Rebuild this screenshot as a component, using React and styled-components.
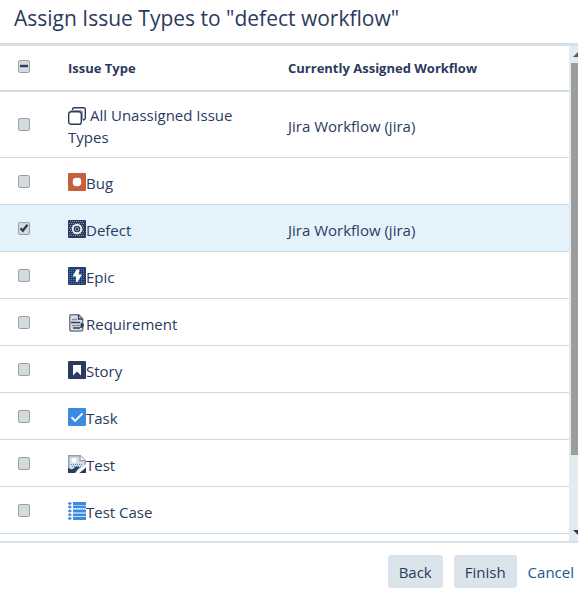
import React, { useEffect, useRef, useState } from "react";
import styled, { createGlobalStyle } from "styled-components";

const ink = "#2b3a5e";
const line = "#cfd9e0";

const GlobalStyle = createGlobalStyle`
  * { box-sizing: border-box; }
  body {
    margin: 0;
    background: #fff;
    color: ${ink};
    font: 15px/22px "Segoe UI", "Open Sans", sans-serif;
  }
`;

const Dialog = styled.section`
  display: flex;
  flex-direction: column;
  height: 100vh;
`;

const Header = styled.header`
  padding: 4px 14px 11px;
  border-bottom: 3px solid #d5dfe5;
`;

const Title = styled.h1`
  margin: 0;
  font-size: 21px;
  line-height: 28px;
  font-weight: 400;
  white-space: nowrap;
`;

const Body = styled.div`
  display: flex;
  flex: 1;
  min-height: 0;
  overflow: hidden;
  border-bottom: 2px solid #d5e2ea;
`;

const TableArea = styled.div`
  flex: 1;
  min-width: 0;
  overflow: hidden;
`;

const Table = styled.table`
  width: 100%;
  border-collapse: separate;
  border-spacing: 0;
  table-layout: fixed;
`;

const HeadCell = styled.th`
  width: ${(p) => p.$width || "auto"};
  height: 46px;
  padding: ${(p) => (p.$tick ? "0 18px 4px" : "0")};
  border-bottom: 2px solid ${line};
  font-size: 13px;
  font-weight: 700;
  text-align: left;
  vertical-align: middle;
`;

const Row = styled.tr`
  background: ${(p) => (p.$selected ? "#e4f3fb" : "#fff")};
`;

const Cell = styled.td`
  height: 47px;
  padding: ${(p) => (p.$tick ? "10px 18px" : "12px 40px 9px 0")};
  border-bottom: 1px solid ${line};
  vertical-align: middle;
`;

const TypeLabel = styled.label`
  display: ${(p) => (p.$wraps ? "block" : "flex")};
  align-items: flex-start;
`;

const Icon = styled.svg`
  flex: none;
  width: 18px;
  height: 18px;
  margin-top: ${(p) => (p.$spaced ? "0" : "1px")};
  vertical-align: -4px;
  margin-right: ${(p) => (p.$spaced ? "4px" : "0")};
`;

const TickBox = styled.span`
  display: block;
  position: relative;
  width: 12px;
  height: 13px;
`;

const TickInput = styled.input`
  appearance: none;
  display: block;
  width: 12px;
  height: 13px;
  margin: 0;
  border: 1px solid #9b9fa1;
  border-radius: 2px;
  background: #d4dbde;
`;

const TickMark = styled.svg`
  position: absolute;
  inset: 0;
  width: 12px;
  height: 12px;
  pointer-events: none;
`;

const ScrollBar = styled.div`
  flex: none;
  display: flex;
  flex-direction: column;
  width: 9px;
  padding-left: 2px;
  overflow: hidden;
  background: #e4ebef;
`;

const ScrollArrow = styled.svg`
  flex: none;
  width: 7px;
  height: 17px;
`;

const ScrollTrack = styled.div`
  flex: 1;
`;

const ScrollThumb = styled.div`
  height: 85%;
  background: #9b9d9e;
`;

const Footer = styled.footer`
  display: flex;
  justify-content: flex-end;
  align-items: center;
  gap: 11px;
  height: 51px;
  padding: 5px 4px 0 14px;
`;

const Button = styled.button`
  height: 33px;
  padding: 2px 11px 0;
  border: 0;
  border-radius: 3px;
  background: #dbe4ea;
  color: ${ink};
  font: inherit;
`;

const CancelLink = styled.a`
  padding-top: 2px;
  color: #1d5596;
  text-decoration: none;
`;

const icons = {
  all: (
    <g fill="none" strokeWidth="1.4">
      <path d="M4.5 3.5v-1q0-1.8 2-1.8h9q1.8 0 1.8 2v8q0 2-2.3 2.3" stroke={ink} />
      <path d="M3 3.7h9.5q1.8 0 1.8 1.5v8" stroke="#9a9c9d" />
      <rect x=".7" y="4.7" width="12.6" height="12.6" rx="2.4" stroke={ink} />
    </g>
  ),
  bug: (
    <>
      <rect width="18" height="18" rx="1" fill="#c5603a" />
      <rect x="4.8" y="4.8" width="8.4" height="8.4" rx="3.4" fill="#fff" />
    </>
  ),
  defect: (
    <>
      <rect width="18" height="18" rx="1" fill={ink} />
      <path
        d="M2 1.5h14M1 3.5h16M2 5.5h14M1 7.5h16M2 9.5h14M1 11.5h16M2 13.5h14M1 15.5h16"
        stroke="#8e959f" strokeDasharray="1 1"
      />
      <circle cx="9" cy="9" r="4.3" fill={ink} stroke="#e8edf0" strokeWidth="2" />
      <circle cx="9" cy="9" r="1.8" fill={ink} stroke="#9b9fa4" />
    </>
  ),
  epic: (
    <>
      <rect width="18" height="18" rx="1" fill={ink} />
      <path
        d="M1 2.5h16M1 4.5h16M1 6.5h16M1 8.5h16M1 10.5h16M1 12.5h16M1 14.5h16M1 16.5h16"
        stroke="#2f7fdc" strokeDasharray="1 1"
      />
      <path d="M8.5 2.5 4.5 9.5H8v5.5h1.5L14 7.5h-3.5l1-5z" fill="#fff" />
    </>
  ),
  requirement: (
    <>
      <path d="M2.5.8h8.2l4 4v11q0 1.2-1.4 1.2H3.2q-1.4 0-1.4-1.4V2z" fill="#dce1e4" stroke="#777d88" strokeWidth="1.5" />
      <path d="M10.5 1v4h4M3 8.5h9M5 14h7" fill="none" stroke={ink} strokeWidth="1.3" />
      <path d="M4 5.5h5M4 11.5h9" stroke="#8b9197" strokeWidth="1.6" />
      <path d="m12.5 8.2 3.5 2.3-1 3-3.5.5 1.5-2.2z" fill={ink} />
    </>
  ),
  story: (
    <>
      <rect width="18" height="18" rx="1" fill={ink} />
      <path d="M5 4h8v10.5l-4-4-4 4z" fill="#fff" />
    </>
  ),
  task: (
    <>
      <rect width="18" height="18" rx="1" fill="#3b8be3" />
      <path d="m3.5 9.2 3.6 3.6 7.4-7.4" fill="none" stroke="#fff" strokeWidth="1.9" />
    </>
  ),
  test: (
    <>
      <path d="M.7.7h11.5l5 5v11.6H.7z" fill="#d3dee6" stroke="#9a9c9e" strokeWidth="1.4" />
      <path d="M12 .7v5h5.2" fill="#fff" stroke="#9a9c9e" strokeWidth="1.3" />
      <circle cx="6" cy="5.5" r="2.4" fill="#fff" />
      <path d="M3 9.5h12M4 11.5h9" stroke="#3b8be3" strokeDasharray="1 1" />
      <path d="M0 18v-5l4 1.5 4-3 4 .5L6.5 18z" fill={ink} />
      <path d="m7.5 18 10.5-9v3.5L11.5 18z" fill="#fff" />
      <path d="m11.5 18 6.5-5.5V18z" fill={ink} />
    </>
  ),
  testCase: (
    <>
      <path d="M5 1.5h13M5 5h13M5 9h13M5 12.8h13M5 16.5h13" stroke="#3b8be3" strokeWidth="2.8" />
      <path d="M0 1.5h3.6M0 5h3.6M0 9h3.6M0 12.8h3.6M0 16.5h3.6M1.8 0v3M1.8 3.5v3M1.8 7.5v3M1.8 11.3v3M1.8 15v3" stroke="#3b8be3" strokeWidth="1.3" />
      <path d="M5 6.5h13" stroke="#fff" strokeDasharray="1 1" />
    </>
  ),
};

const issueTypes = [
  { id: "all", name: "All Unassigned Issue Types", workflow: "Jira Workflow (jira)" },
  { id: "bug", name: "Bug" },
  { id: "defect", name: "Defect", workflow: "Jira Workflow (jira)" },
  { id: "epic", name: "Epic" },
  { id: "requirement", name: "Requirement" },
  { id: "story", name: "Story" },
  { id: "task", name: "Task" },
  { id: "test", name: "Test" },
  { id: "testCase", name: "Test Case" },
];

function Tick({ id, label, checked, mixed, onChange }) {
  const ref = useRef(null);
  useEffect(() => {
    ref.current.indeterminate = Boolean(mixed);
  }, [mixed]);
  return (
    <TickBox>
      <TickInput ref={ref} id={id} type="checkbox" aria-label={label} checked={checked} onChange={onChange} />
      {(mixed || checked) && (
        <TickMark viewBox="0 0 12 12" aria-hidden="true">
          {mixed ? (
            <path d="M2 6h8" stroke={ink} strokeWidth="2.4" />
          ) : (
            <path d="m2.5 6.2 2.3 2.5 4.7-6" fill="none" stroke={ink} strokeWidth="2.3" />
          )}
        </TickMark>
      )}
    </TickBox>
  );
}

export default function App() {
  const [selected, setSelected] = useState(["defect"]);
  const all = selected.length === issueTypes.length;
  const toggle = (id) =>
    setSelected((now) => (now.includes(id) ? now.filter((x) => x !== id) : [...now, id]));

  return (
    <>
      <GlobalStyle />
      <Dialog>
        <Header>
          <Title>Assign Issue Types to "defect workflow"</Title>
        </Header>
        <Body>
          <TableArea>
            <Table>
              <thead>
                <tr>
                  <HeadCell $width="68px" $tick>
                    <Tick
                      id="every"
                      label="Select all issue types"
                      checked={all}
                      mixed={selected.length > 0 && !all}
                      onChange={() => setSelected(all ? [] : issueTypes.map((t) => t.id))}
                    />
                  </HeadCell>
                  <HeadCell $width="220px">Issue Type</HeadCell>
                  <HeadCell>Currently Assigned Workflow</HeadCell>
                </tr>
              </thead>
              <tbody>
                {issueTypes.map((type) => (
                  <Row key={type.id} $selected={selected.includes(type.id)}>
                    <Cell $tick>
                      <Tick id={type.id} checked={selected.includes(type.id)} onChange={() => toggle(type.id)} />
                    </Cell>
                    <Cell>
                      <TypeLabel htmlFor={type.id} $wraps={type.id === "all"}>
                        <Icon viewBox="0 0 18 18" aria-hidden="true" $spaced={type.id === "all"}>
                          {icons[type.id]}
                        </Icon>
                        {type.name}
                      </TypeLabel>
                    </Cell>
                    <Cell>{type.workflow}</Cell>
                  </Row>
                ))}
              </tbody>
            </Table>
          </TableArea>
          <ScrollBar aria-hidden="true">
            <ScrollArrow viewBox="0 0 7 17">
              <path d="M2 11 7 6v5z" fill="#55595d" />
            </ScrollArrow>
            <ScrollTrack>
              <ScrollThumb />
            </ScrollTrack>
            <ScrollArrow viewBox="0 0 7 17">
              <path d="M2 6h5v5z" fill={ink} />
            </ScrollArrow>
          </ScrollBar>
        </Body>
        <Footer>
          <Button type="button">Back</Button>
          <Button type="button">Finish</Button>
          <CancelLink href="#cancel">Cancel</CancelLink>
        </Footer>
      </Dialog>
    </>
  );
}
